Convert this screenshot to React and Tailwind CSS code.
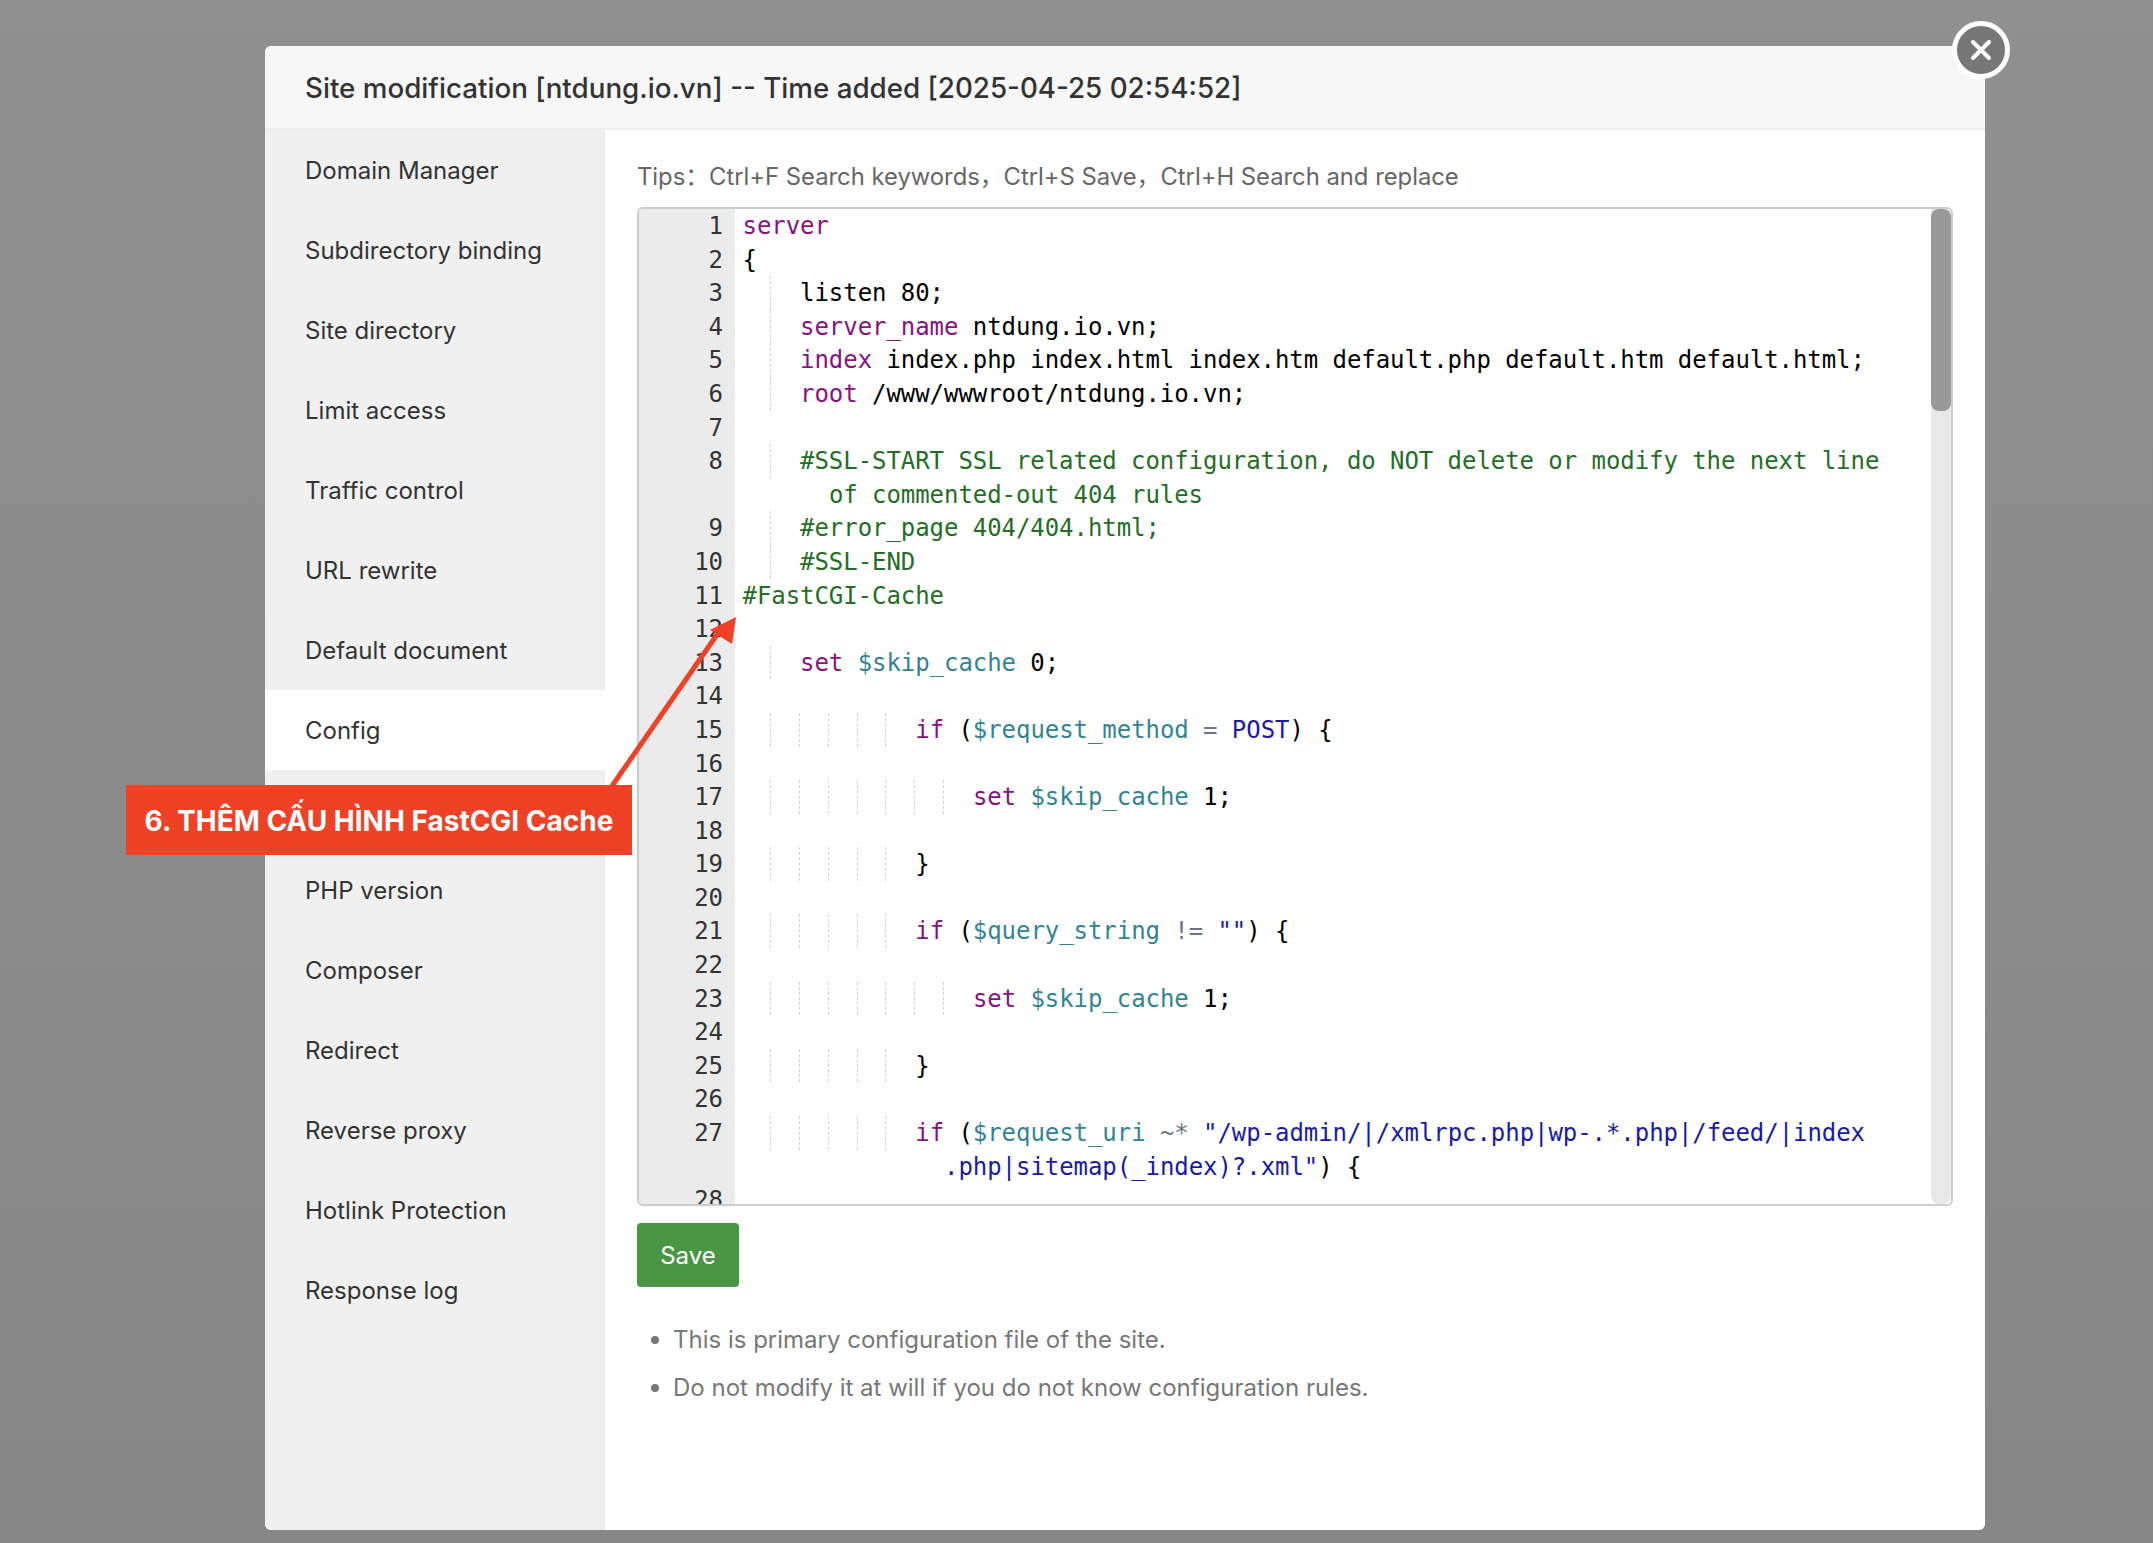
const menu = [
  "Domain Manager",
  "Subdirectory binding",
  "Site directory",
  "Limit access",
  "Traffic control",
  "URL rewrite",
  "Default document",
  "Config",
  "SSL",
  "PHP version",
  "Composer",
  "Redirect",
  "Reverse proxy",
  "Hotlink Protection",
  "Response log",
];

const K = ({ children }) => <span className="text-[#881280]">{children}</span>;
const C = ({ children }) => <span className="text-[#236e24]">{children}</span>;
const V = ({ children }) => <span className="text-[#318495]">{children}</span>;
const S = ({ children }) => <span className="text-[#1a1aa6]">{children}</span>;
const O = ({ children }) => <span className="text-[#687687]">{children}</span>;

// each row: [line number, indent in chars, content]
const rows = [
  [1, 0, <K>server</K>],
  [2, 0, "{"],
  [3, 4, "listen 80;"],
  [4, 4, <><K>server_name</K> ntdung.io.vn;</>],
  [5, 4, <><K>index</K> index.php index.html index.htm default.php default.htm default.html;</>],
  [6, 4, <><K>root</K> /www/wwwroot/ntdung.io.vn;</>],
  [7, 0, ""],
  [8, 4, <C>#SSL-START SSL related configuration, do NOT delete or modify the next line</C>],
  [null, -6, <C>of commented-out 404 rules</C>],
  [9, 4, <C>#error_page 404/404.html;</C>],
  [10, 4, <C>#SSL-END</C>],
  [11, 0, <C>#FastCGI-Cache</C>],
  [12, 0, ""],
  [13, 4, <><K>set</K> <V>$skip_cache</V> 0;</>],
  [14, 0, ""],
  [15, 12, <><K>if</K> (<V>$request_method</V> <O>=</O> <S>POST</S>) {"{"}</>],
  [16, 0, ""],
  [17, 16, <><K>set</K> <V>$skip_cache</V> 1;</>],
  [18, 0, ""],
  [19, 12, "}"],
  [20, 0, ""],
  [21, 12, <><K>if</K> (<V>$query_string</V> <O>!=</O> <S>""</S>) {"{"}</>],
  [22, 0, ""],
  [23, 16, <><K>set</K> <V>$skip_cache</V> 1;</>],
  [24, 0, ""],
  [25, 12, "}"],
  [26, 0, ""],
  [27, 12, <><K>if</K> (<V>$request_uri</V> <O>~*</O> <S>"/wp-admin/|/xmlrpc.php|wp-.*.php|/feed/|index</S></>],
  [null, -14, <><S>.php|sitemap(_index)?.xml"</S>) {"{"}</>],
  [28, 0, ""],
];

function Guides({ indent }) {
  const units = [];
  const count = Math.abs(indent) / 2;
  for (let i = 0; i < count; i++) {
    units.push(
      <span
        key={i}
        className={`block w-[28.8px] h-[33.6px] shrink-0 ${indent > 0 && i < count - 1 ? "border-r border-dashed border-[#d0d0d0]" : ""}`}
      />
    );
  }
  return <>{units}</>;
}

function Editor() {
  return (
    <div className="flex h-[999px] border-2 border-[#cccccc] rounded-md overflow-hidden font-['DejaVu_Sans_Mono',monospace] text-[24px] tracking-[-0.06px] text-black">
      <div className="flex-1 overflow-hidden">
        {rows.map((r, i) => (
          <div key={i} className="flex h-[33.6px] leading-[33.6px] whitespace-pre">
            <div className="w-[96px] shrink-0 bg-[#ebebeb] text-right pr-[12px] pt-[1px] text-[#333333]">{r[0]}</div>
            <div className="flex pl-[7.5px]">
              <Guides indent={r[1]} />
              <span className="pt-[1px]">{r[2]}</span>
            </div>
          </div>
        ))}
      </div>
      <div className="w-[20px] shrink-0 bg-[#e8e8e8] rounded-b-lg">
        <div className="h-[202px] bg-[#999999] rounded-lg" />
      </div>
    </div>
  );
}

export default function App() {
  return (
    <div className="h-[1543px] pt-[46px] pl-[265px] bg-gradient-to-b from-[#909090] to-[#878787] font-['Inter',sans-serif] overflow-hidden">
      <div className="relative w-[1720px] h-[1484px] bg-white rounded-md flex flex-col">
        <div className="h-[84px] shrink-0 bg-[#f7f7f7] border-b-2 border-[#eeeeee] rounded-t-md flex items-center pl-10 pt-[4px] text-[27.75px] font-medium text-[#333333]">
          Site modification [ntdung.io.vn] -- Time added [2025-04-25 02:54:52]
        </div>
        <div className="flex flex-1 min-h-0">
          <div className="w-[340px] shrink-0 bg-[#f0f0f0] rounded-bl-md">
            {menu.map((m) => (
              <div
                key={m}
                className={`h-[80px] flex items-center pl-10 pt-[2px] text-[24px] text-[#333333] ${m === "Config" ? "bg-white" : ""}`}
              >
                {m}
              </div>
            ))}
          </div>
          <div className="flex-1 px-8 pt-[32px]">
            <div className="h-[45px] text-[23.8px] leading-[30px] text-[#666666] font-['Inter','Noto_Sans_CJK_SC',sans-serif]">
              Tips：Ctrl+F Search keywords，Ctrl+S Save，Ctrl+H Search and replace
            </div>
            <Editor />
            <button className="mt-[17px] w-[102px] h-[64px] pt-[2px] bg-[#4a9645] text-white text-[24px] rounded">Save</button>
            <ul className="mt-[29px] pl-[14px] text-[24px] text-[#777777]">
              <li className="h-[48px] flex items-center gap-[14px]">
                <span className="w-[8px] h-[8px] rounded-full bg-[#777777]" />
                This is primary configuration file of the site.
              </li>
              <li className="h-[48px] flex items-center gap-[14px]">
                <span className="w-[8px] h-[8px] rounded-full bg-[#777777]" />
                Do not modify it at will if you do not know configuration rules.
              </li>
            </ul>
          </div>
        </div>

        {/* close button */}
        <div className="absolute left-[1687px] -top-[25px] w-[58px] h-[58px] rounded-full bg-[#777777] border-[5px] border-white flex items-center justify-center">
          <svg width="24" height="24" viewBox="0 0 24 24" fill="none" stroke="white" strokeWidth="4" strokeLinecap="round">
            <path d="M4 4l16 16M20 4L4 20" />
          </svg>
        </div>

        {/* annotation */}
        <svg className="absolute left-[340px] top-[560px]" width="140" height="190" viewBox="0 0 140 190" fill="none">
          <path d="M7 180L118 20" stroke="#ee4125" strokeWidth="5" />
          <polygon points="131,11 105,24 127,38" fill="#ee4125" />
        </svg>
        <div className="absolute left-[-139px] top-[739px] w-[506px] h-[70px] pt-[2px] bg-[#ee4125] text-white font-bold text-[28px] flex items-center justify-center">
          6. THÊM CẤU HÌNH FastCGI Cache
        </div>
      </div>
    </div>
  );
}
